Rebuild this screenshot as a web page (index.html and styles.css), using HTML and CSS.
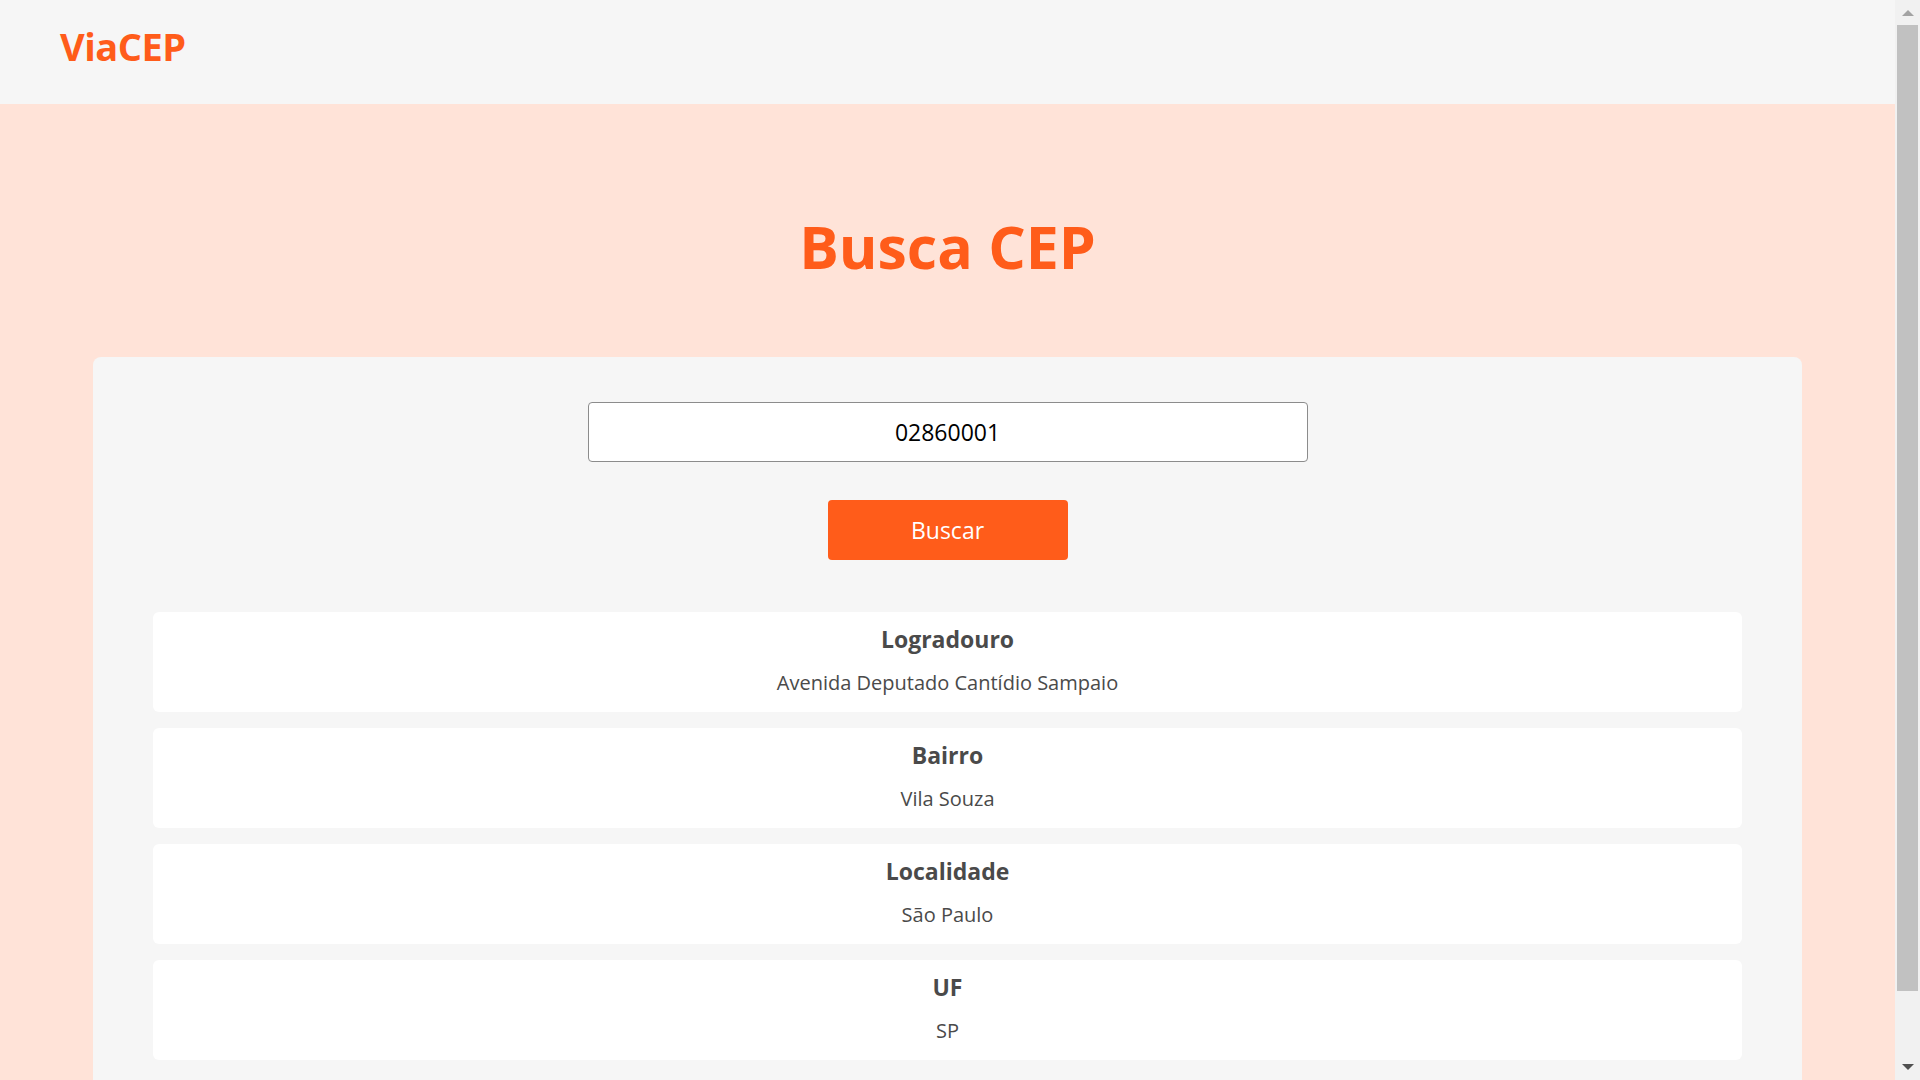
FILE: index.html
```html
<!DOCTYPE html>
<html lang="pt-BR">
<head>
<meta charset="utf-8">
<title>ViaCEP - Busca CEP</title>
<link rel="stylesheet" href="styles.css">
</head>
<body>
<div class="page">
  <header class="topbar">
    <div class="logo">ViaCEP</div>
  </header>
  <main class="hero">
    <h1 class="title">Busca CEP</h1>
    <section class="card">
      <form class="search">
        <input class="cep-input" type="text" value="02860001">
        <button class="btn" type="button">Buscar</button>
      </form>
      <div class="results">
        <div class="item">
          <div class="label">Logradouro</div>
          <div class="value">Avenida Deputado Cantídio Sampaio</div>
        </div>
        <div class="item">
          <div class="label">Bairro</div>
          <div class="value">Vila Souza</div>
        </div>
        <div class="item">
          <div class="label">Localidade</div>
          <div class="value">São Paulo</div>
        </div>
        <div class="item">
          <div class="label">UF</div>
          <div class="value">SP</div>
        </div>
      </div>
    </section>
  </main>
</div>
<div class="scrollbar" aria-hidden="true">
  <span class="arrow-up"></span>
  <span class="thumb"></span>
  <span class="arrow-down"></span>
</div>
</body>
</html>
```
FILE: styles.css
```css
* { box-sizing: border-box; }
html, body { margin: 0; padding: 0; }
body {
  font-family: "Open Sans", "Noto Sans", sans-serif;
  background: #ffe3d8;
  color: #4a4a4a;
}
.page {
  width: calc(100% - 25px);
}
.topbar {
  height: 104px;
  background: #f6f6f6;
  display: flex;
  align-items: center;
  padding: 0 0 12px 60px;
}
.logo {
  font-size: 38px;
  font-weight: 700;
  color: #ff5c1a;
  letter-spacing: -0.5px;
}
.hero {
  background: #ffe3d8;
  padding-top: 106px;
}
.title {
  margin: 0;
  text-align: center;
  font-size: 59px;
  line-height: 72px;
  font-weight: 700;
  color: #ff5c1a;
}
.card {
  width: 1709px;
  margin: 75px auto 0;
  background: #f6f6f6;
  border-radius: 8px 8px 0 0;
  padding: 45px 60px 45px;
}
.search {
  display: flex;
  flex-direction: column;
  align-items: center;
  gap: 38px;
}
.cep-input {
  width: 720px;
  height: 60px;
  border: 1px solid #8c8c8c;
  border-radius: 4px;
  background: #fff;
  text-align: center;
  font-family: "Open Sans", "Noto Sans", sans-serif;
  font-size: 23px;
  color: #000;
}
.btn {
  width: 240px;
  height: 60px;
  border: 0;
  border-radius: 4px;
  background: #ff5c1a;
  color: #fff;
  font-family: "Open Sans", "Noto Sans", sans-serif;
  font-size: 23px;
}
.results {
  margin-top: 52px;
  display: flex;
  flex-direction: column;
  gap: 16px;
}
.item {
  background: #fff;
  border-radius: 6px;
  height: 100px;
  padding-top: 12px;
  text-align: center;
}
.label {
  font-size: 23px;
  font-weight: 700;
  line-height: 30px;
}
.value {
  margin-top: 15px;
  font-size: 20px;
  line-height: 28px;
}
.scrollbar {
  position: fixed;
  top: 0;
  right: 0;
  width: 25px;
  height: 100vh;
  background: #f1f1f1;
  display: flex;
  flex-direction: column;
  align-items: center;
}
.arrow-up {
  margin-top: 10px;
  width: 0;
  height: 0;
  border-left: 6px solid transparent;
  border-right: 6px solid transparent;
  border-bottom: 6px solid #a3a3a3;
}
.thumb {
  margin-top: 9px;
  width: 21px;
  height: 966px;
  background: #c1c1c1;
}
.arrow-down {
  margin-top: 73px;
  width: 0;
  height: 0;
  border-left: 6px solid transparent;
  border-right: 6px solid transparent;
  border-top: 6px solid #505050;
}
```
